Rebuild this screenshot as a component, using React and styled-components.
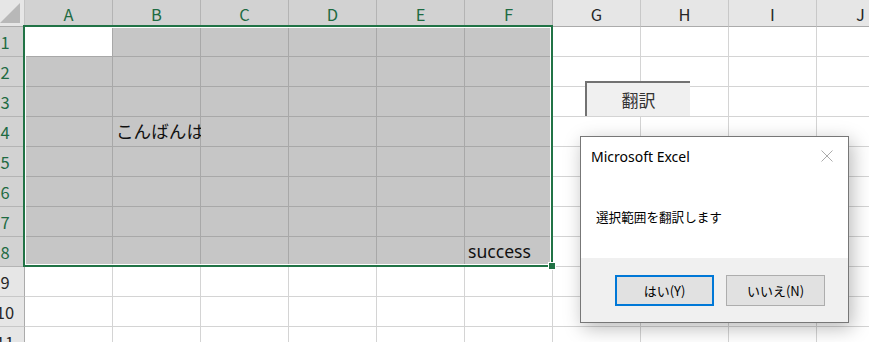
import React from 'react';
import styled, { createGlobalStyle } from 'styled-components';

const GlobalStyle = createGlobalStyle`
  html, body {
    margin: 0;
    padding: 0;
    background: #ffffff;
    overflow: hidden;
  }
  body {
    font-family: "Noto Sans CJK JP", "Noto Sans", sans-serif;
  }
`;

const COLS = ['A', 'B', 'C', 'D', 'E', 'F', 'G', 'H', 'I', 'J'];
const ROWS = [1, 2, 3, 4, 5, 6, 7, 8, 9, 10, 11];
const SELECTED_COLS = 6;
const SELECTED_ROWS = 8;

const Sheet = styled.div`
  position: relative;
  width: 869px;
  height: 342px;
  overflow: hidden;
`;

const Grid = styled.div`
  display: grid;
  grid-template-columns: 39px repeat(10, 88px);
  grid-template-rows: 27px repeat(11, 30px);
  margin-left: -14px;
`;

const Corner = styled.div`
  position: relative;
  background: #e6e6e6;
  border-right: 1px solid #c4c4c4;
  border-bottom: 1px solid #ababab;
  box-sizing: border-box;

  &::after {
    content: '';
    position: absolute;
    right: 4px;
    bottom: 3px;
    width: 20px;
    height: 20px;
    background: #b8b8b8;
    clip-path: polygon(100% 0, 100% 100%, 0 100%);
  }
`;

const ColHeader = styled.div`
  display: flex;
  align-items: center;
  justify-content: center;
  box-sizing: border-box;
  background: ${(p) => (p.$sel ? '#d2d2d2' : '#e6e6e6')};
  color: ${(p) => (p.$sel ? '#1e6b42' : '#262626')};
  border-right: 1px solid ${(p) => (p.$sel ? '#b4b4b4' : '#c8c8c8')};
  border-bottom: 1px solid #ababab;
  font-size: 16.5px;
  padding-top: 1px;
`;

const RowHeader = styled.div`
  display: flex;
  align-items: center;
  justify-content: center;
  box-sizing: border-box;
  background: ${(p) => (p.$sel ? '#d2d2d2' : '#e6e6e6')};
  color: ${(p) => (p.$sel ? '#1e6b42' : '#262626')};
  border-right: 1px solid #ababab;
  border-bottom: 1px solid ${(p) => (p.$sel ? '#b4b4b4' : '#c8c8c8')};
  font-size: 16.5px;
  white-space: nowrap;
`;

const Cell = styled.div`
  display: flex;
  align-items: flex-end;
  box-sizing: border-box;
  padding: 0 0 3px 3px;
  background: ${(p) => (p.$active ? '#ffffff' : p.$sel ? '#c6c6c6' : '#ffffff')};
  border-right: 1px solid ${(p) => (p.$sel ? '#a8a8a8' : '#d4d4d4')};
  border-bottom: 1px solid ${(p) => (p.$sel ? '#a8a8a8' : '#d4d4d4')};
  font-family: "Noto Sans", "Noto Sans CJK JP", sans-serif;
  font-size: 17.6px;
  color: #111;
  white-space: nowrap;
  overflow: visible;
`;

const Selection = styled.div`
  position: absolute;
  left: 23px;
  top: 25px;
  width: 530px;
  height: 242px;
  box-sizing: border-box;
  border: 2px solid #217346;
  box-shadow: inset 0 0 0 1px #ffffff;
  pointer-events: none;
`;

const FillHandle = styled.div`
  position: absolute;
  right: -4px;
  bottom: -4px;
  width: 6px;
  height: 6px;
  background: #217346;
  box-shadow: 0 0 0 1px #ffffff;
`;

const MacroButton = styled.button`
  position: absolute;
  left: 585px;
  top: 81px;
  width: 105px;
  height: 35px;
  box-sizing: border-box;
  margin: 0;
  padding: 0;
  background: #f0f0f0;
  border: none;
  border-top: 2px solid #727272;
  border-left: 2px solid #727272;
  font-family: "Noto Sans CJK JP", sans-serif;
  font-size: 17px;
  color: #333;
`;

const Dialog = styled.div`
  position: absolute;
  left: 580px;
  top: 136px;
  width: 269px;
  height: 187px;
  box-sizing: border-box;
  display: flex;
  flex-direction: column;
  background: #ffffff;
  border: 1px solid #777777;
  box-shadow: 3px 5px 18px rgba(0, 0, 0, 0.28);
`;

const TitleBar = styled.div`
  height: 38px;
  display: flex;
  align-items: center;
  justify-content: space-between;
  padding: 0 15px 0 10px;
`;

const Title = styled.span`
  font-family: "Noto Sans", sans-serif;
  font-size: 14px;
  color: #000;
`;

const Body = styled.div`
  flex: 1;
  display: flex;
  align-items: center;
  padding-left: 15px;
  font-size: 12.6px;
  color: #000;
`;

const Footer = styled.div`
  height: 64px;
  display: flex;
  align-items: center;
  justify-content: flex-end;
  gap: 12px;
  padding-right: 23px;
  background: #f0f0f0;
`;

const DialogButton = styled.button`
  width: 99px;
  height: 31px;
  box-sizing: border-box;
  margin: 0;
  padding: 0;
  background: #e1e1e1;
  border: ${(p) => (p.$default ? '2px solid #0078d7' : '1px solid #adadad')};
  font-family: "Noto Sans CJK JP", sans-serif;
  font-size: 13px;
  color: #000;
`;

const CloseIcon = () => (
  <svg width="12" height="12" viewBox="0 0 12 12">
    <path d="M0.5 0.5 L11.5 11.5 M11.5 0.5 L0.5 11.5" stroke="#ababab" strokeWidth="1" fill="none" />
  </svg>
);

const cellText = {
  '4-1': 'こんばんは',
  '8-5': 'success',
};

export default function App() {
  return (
    <>
      <GlobalStyle />
      <Sheet>
        <Grid>
          <Corner />
          {COLS.map((c, i) => (
            <ColHeader key={c} $sel={i < SELECTED_COLS}>
              {c}
            </ColHeader>
          ))}
          {ROWS.map((r) => (
            <React.Fragment key={r}>
              <RowHeader $sel={r <= SELECTED_ROWS}>{r}</RowHeader>
              {COLS.map((c, i) => {
                const sel = r <= SELECTED_ROWS && i < SELECTED_COLS;
                return (
                  <Cell key={c} $sel={sel} $active={r === 1 && i === 0}>
                    {cellText[`${r}-${i}`]}
                  </Cell>
                );
              })}
            </React.Fragment>
          ))}
        </Grid>
        <Selection>
          <FillHandle />
        </Selection>
        <MacroButton>翻訳</MacroButton>
        <Dialog>
          <TitleBar>
            <Title>Microsoft Excel</Title>
            <CloseIcon />
          </TitleBar>
          <Body>選択範囲を翻訳します</Body>
          <Footer>
            <DialogButton $default>はい(Y)</DialogButton>
            <DialogButton>いいえ(N)</DialogButton>
          </Footer>
        </Dialog>
      </Sheet>
    </>
  );
}
